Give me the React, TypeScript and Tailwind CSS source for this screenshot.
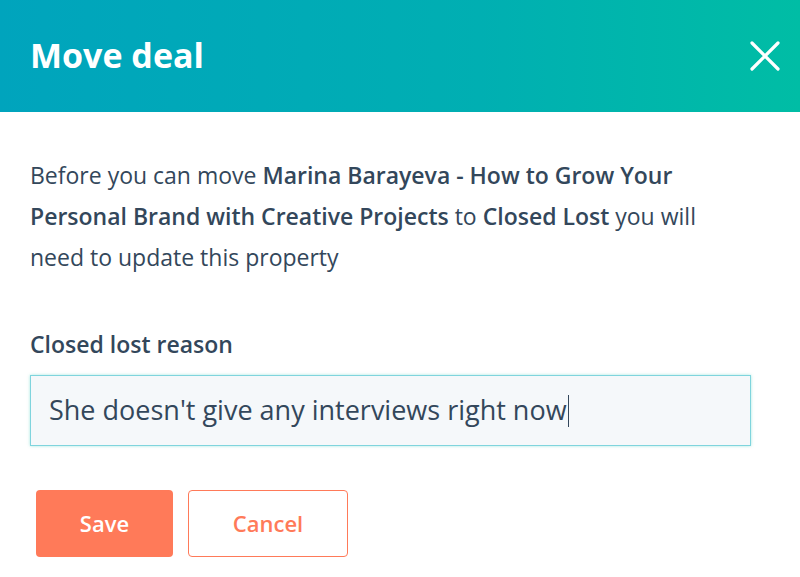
import React from "react";

export default function App() {
  return (
    <div className="w-[800px] h-[577px] bg-white overflow-hidden" style={{ fontFamily: "'Open Sans', Lato, sans-serif" }}>
      <div className="h-[112px] flex items-center justify-between pl-[30px] pr-[20px] bg-[linear-gradient(90deg,#00a4bd_0%,#00afb2_60%,#00bda5_100%)]">
        <h1 className="text-white font-bold text-[34px] leading-none mt-[-2px]">Move deal</h1>
        <svg width="30" height="30" viewBox="0 0 30 30">
          <path d="M2 2 L28 28 M28 2 L2 28" stroke="white" strokeWidth="3.2" strokeLinecap="round" />
        </svg>
      </div>
      <div className="px-[30px] pt-[43px]">
        <p className="text-[#33475b] text-[23px] leading-[41px] whitespace-nowrap">
          Before you can move <span className="font-semibold">Marina Barayeva - How to Grow Your</span>
          <br />
          <span className="font-semibold">Personal Brand with Creative Projects</span> to <span className="font-semibold">Closed Lost</span> you will
          <br />
          need to update this property
        </p>
        <div className="mt-[55px] text-[#33475b] text-[23px] font-semibold leading-none">Closed lost reason</div>
        <div className="mt-[19px] w-[721px] h-[71px] border border-[#7fd4dd] bg-[#f5f8fa] flex items-center pl-[18px] shadow-[0_0_3px_rgba(0,189,165,0.35)]">
          <span className="text-[#33475b] text-[27px]">She doesn't give any interviews right now</span>
          <span className="w-[1.5px] h-[32px] bg-[#33475b] ml-[1px]"></span>
        </div>
        <div className="mt-[44px] flex gap-[15px] pl-[6px]">
          <button className="w-[137px] h-[67px] rounded-[4px] bg-[#ff7a59] text-white text-[22px] font-semibold">Save</button>
          <button className="w-[160px] h-[67px] rounded-[4px] border border-[#ff7a59] bg-white text-[#ff7a59] text-[22px] font-semibold">Cancel</button>
        </div>
      </div>
    </div>
  );
}
